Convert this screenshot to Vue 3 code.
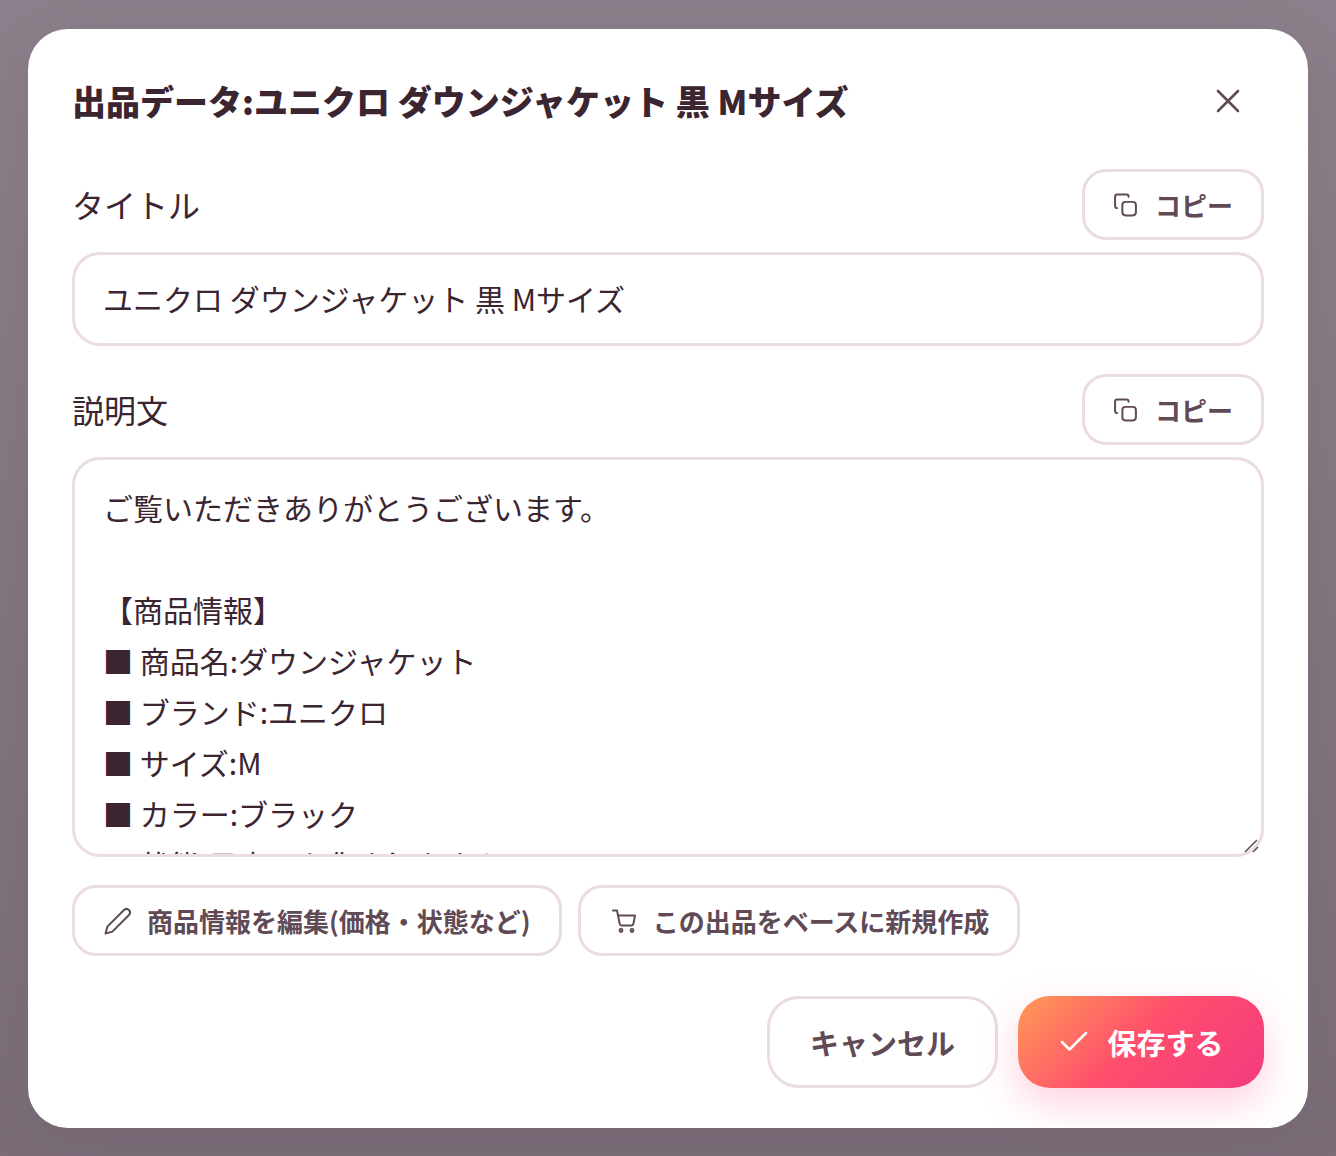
<script setup>
const title = 'ユニクロ ダウンジャケット 黒 Mサイズ'
const description = `ご覧いただきありがとうございます。

【商品情報】
■ 商品名:ダウンジャケット
■ ブランド:ユニクロ
■ サイズ:M
■ カラー:ブラック
■ 状態:目立った傷や汚れなし

ご検討よろしくお願いします。`
</script>

<template>
  <div class="backdrop">
    <section class="modal">
      <header class="head">
        <h1>出品データ:ユニクロ ダウンジャケット 黒 Mサイズ</h1>
        <button class="close" aria-label="閉じる">
          <svg width="26" height="26" viewBox="0 0 26 26" fill="none" stroke="currentColor" stroke-width="2.6" stroke-linecap="round"><path d="M3 3 L23 23 M23 3 L3 23"/></svg>
        </button>
      </header>

      <div class="label-row">
        <label>タイトル</label>
        <button class="btn copy">
          <svg width="26" height="26" viewBox="0 0 24 24" fill="none" stroke="currentColor" stroke-width="1.9" stroke-linecap="round" stroke-linejoin="round"><rect x="9" y="9" width="13" height="13" rx="3"/><path d="M4 15 C2.9 15 2 14.1 2 13 V4 C2 2.9 2.9 2 4 2 H13 C14.1 2 15 2.9 15 4"/></svg>
          コピー
        </button>
      </div>
      <input class="field" :value="title" />

      <div class="label-row second">
        <label>説明文</label>
        <button class="btn copy">
          <svg width="26" height="26" viewBox="0 0 24 24" fill="none" stroke="currentColor" stroke-width="1.9" stroke-linecap="round" stroke-linejoin="round"><rect x="9" y="9" width="13" height="13" rx="3"/><path d="M4 15 C2.9 15 2 14.1 2 13 V4 C2 2.9 2.9 2 4 2 H13 C14.1 2 15 2.9 15 4"/></svg>
          コピー
        </button>
      </div>
      <div class="area-wrap">
        <textarea class="field area" :value="description"></textarea>
        <svg class="grip" width="16" height="16" viewBox="0 0 16 16" fill="none" stroke="#5a5a5a" stroke-width="1.6"><path d="M1 14 L13 2 M9 14 L14 9"/></svg>
      </div>

      <div class="actions">
        <button class="btn">
          <svg width="30" height="30" viewBox="0 0 24 24" fill="none" stroke="currentColor" stroke-width="1.6" stroke-linecap="round" stroke-linejoin="round"><path d="M17 3 a2.85 2.85 0 0 1 4 4 L7.5 20.5 2 22 l1.5-5.5 Z"/></svg>
          商品情報を編集(価格・状態など)
        </button>
        <button class="btn">
          <svg width="30" height="30" viewBox="-3 -3.5 30 30" fill="none" stroke="currentColor" stroke-width="2" stroke-linecap="round" stroke-linejoin="round"><circle cx="9" cy="21" r="1.4"/><circle cx="20" cy="21" r="1.4"/><path d="M1 1 h4 l2.7 13.4 a2 2 0 0 0 2 1.6 h9.7 a2 2 0 0 0 2-1.6 L23 6 H6"/></svg>
          この出品をベースに新規作成
        </button>
      </div>

      <footer class="foot">
        <button class="big cancel">キャンセル</button>
        <button class="big save">
          <svg width="36" height="36" viewBox="0 0 24 24" fill="none" stroke="currentColor" stroke-width="1.7" stroke-linecap="round" stroke-linejoin="round"><path d="M20 6 L9 17 L4 12"/></svg>
          保存する
        </button>
      </footer>
    </section>
  </div>
</template>

<style>
html, body { margin: 0; }
</style>

<style scoped>
.backdrop {
  box-sizing: border-box;
  height: 1156px;
  padding: 29px 28px 28px;
  background: linear-gradient(180deg, #8b808b 0%, #7a6d78 100%);
  font-family: "Noto Sans CJK JP", "Noto Sans", sans-serif;
  color: #3a2530;
  overflow: hidden;
}
.modal {
  box-sizing: border-box;
  height: 1099px;
  padding: 44px 44px 40px;
  background: #fff;
  border-radius: 40px;
  box-shadow: 0 8px 60px rgba(58, 37, 48, 0.1);
}
.head {
  display: flex;
  align-items: center;
  justify-content: space-between;
  height: 56px;
  margin-bottom: 40px;
}
h1 {
  margin: 0;
  font-size: 34px;
  font-weight: 900;
  line-height: 56px;
}
.close {
  display: flex;
  padding: 0;
  margin-right: 23px;
  border: 0;
  background: none;
  color: #5f4a55;
}
.label-row {
  display: flex;
  align-items: center;
  justify-content: space-between;
  height: 71px;
  margin-bottom: 12px;
}
.second { margin-top: 28px; }
label {
  font-size: 32px;
  line-height: 71px;
}
.btn {
  box-sizing: border-box;
  display: inline-flex;
  align-items: center;
  height: 71px;
  gap: 14px;
  padding: 0 28px;
  border: 3px solid #ebdce2;
  border-radius: 24px;
  background: #fff;
  color: #5f4a55;
  font: 700 26px/1 "Noto Sans CJK JP", "Noto Sans", sans-serif;
  white-space: nowrap;
}
.copy {
  width: 182px;
  gap: 17px;
}
.field {
  box-sizing: border-box;
  display: block;
  width: 100%;
  height: 94px;
  padding: 0 28px 2px;
  border: 3px solid #ebdce2;
  border-radius: 28px;
  outline: none;
  background: #fff;
  color: #3a2530;
  font: 400 30px/1.7 "Noto Sans CJK JP", "Noto Sans", sans-serif;
}
.area-wrap {
  position: relative;
}
.area {
  height: 400px;
  padding: 22px 28px;
  resize: none;
  overflow: hidden;
}
.grip {
  position: absolute;
  right: 4px;
  bottom: 3px;
}
.actions {
  display: flex;
  gap: 16px;
  margin-top: 28px;
}
.foot {
  display: flex;
  justify-content: flex-end;
  gap: 20px;
  margin-top: 40px;
}
.big {
  box-sizing: border-box;
  display: inline-flex;
  align-items: center;
  justify-content: center;
  height: 92px;
  border-radius: 32px;
  font: 700 29px/1 "Noto Sans CJK JP", "Noto Sans", sans-serif;
}
.cancel {
  width: 231px;
  border: 3px solid #ebdce2;
  background: #fff;
  color: #5f4a55;
}
.save {
  width: 246px;
  gap: 15px;
  padding: 0 2px 0 0;
  border: 0;
  color: #fff;
  background: linear-gradient(135deg, #ff9a56 0%, #ff4d6d 50%, #f23a80 100%);
  box-shadow: 0 16px 40px rgba(255, 77, 125, 0.25);
}
</style>
